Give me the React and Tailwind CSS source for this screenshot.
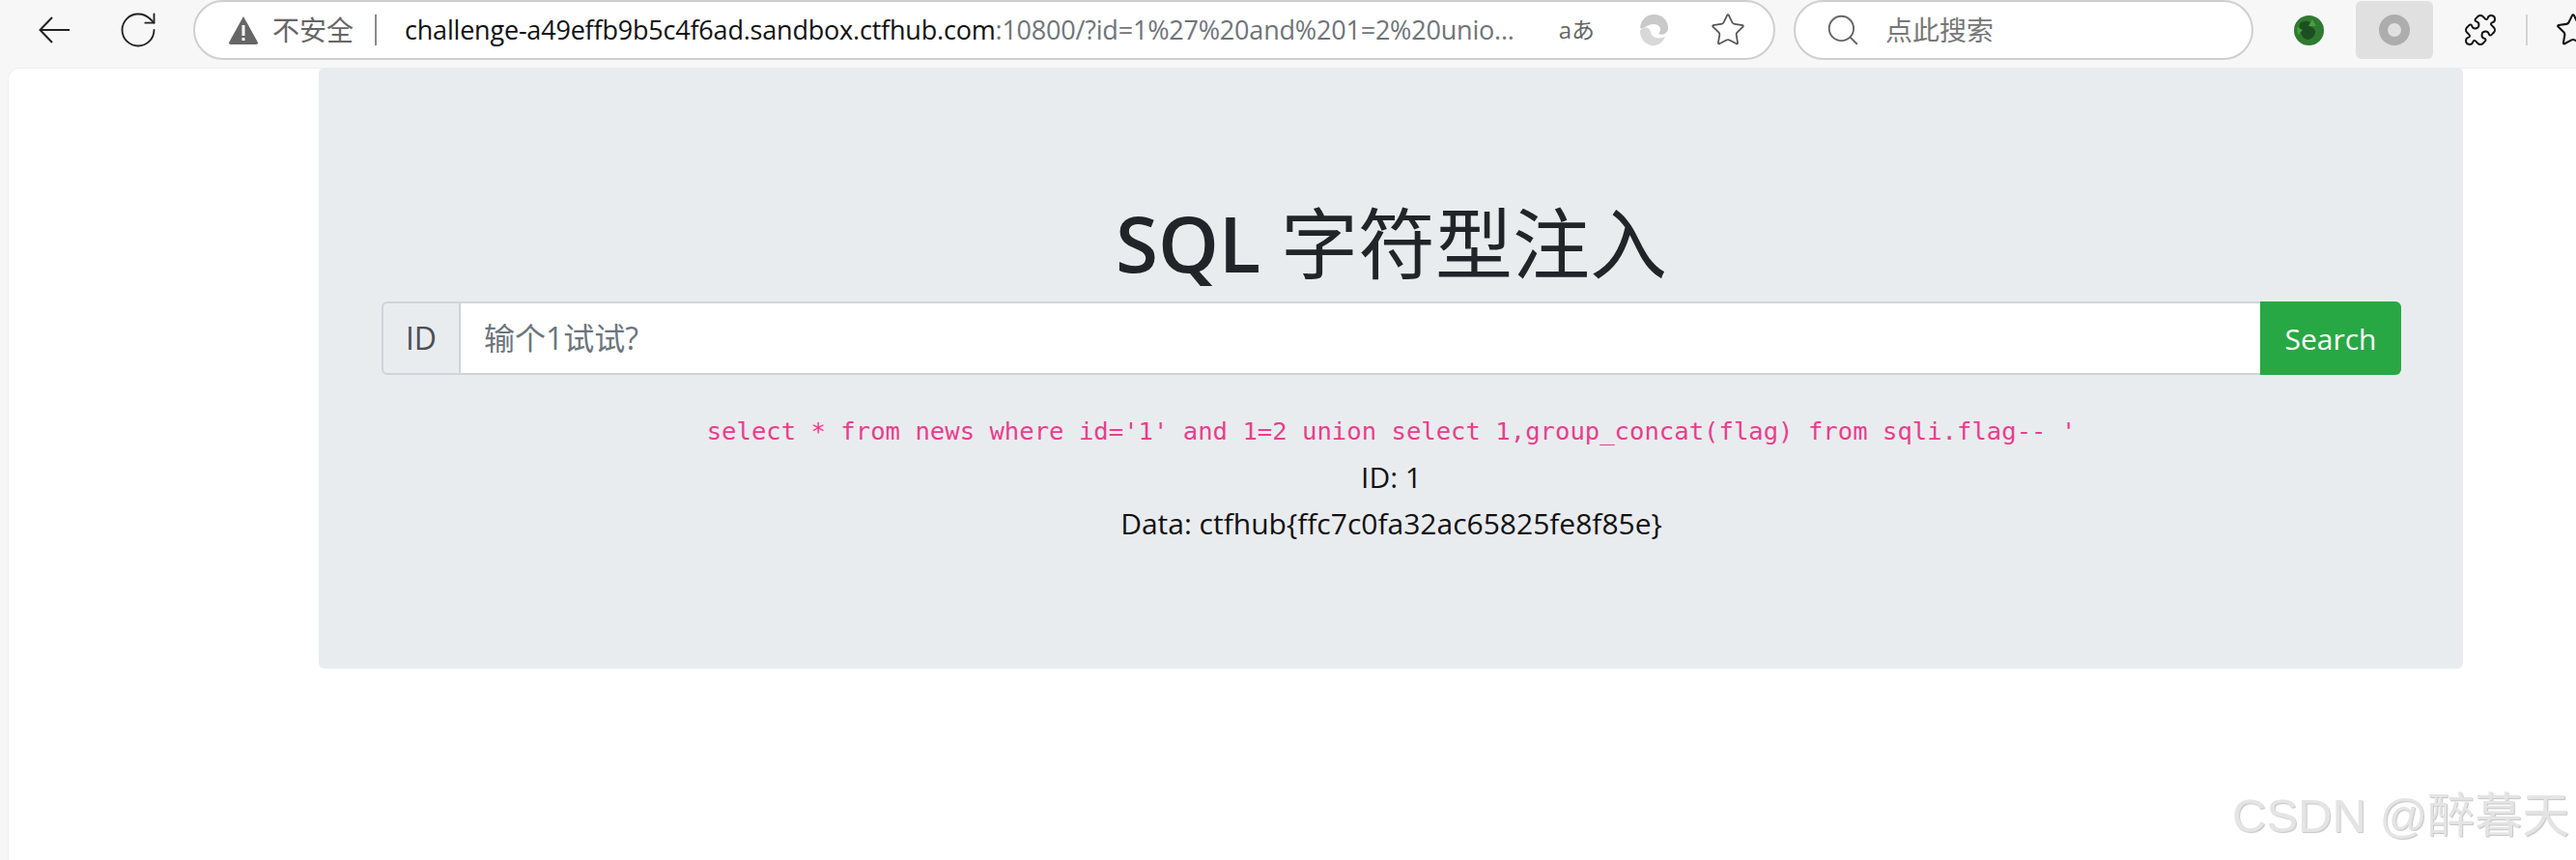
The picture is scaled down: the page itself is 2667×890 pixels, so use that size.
import React from "react";
import { RotateCw, Star, Search, Puzzle } from "lucide-react";

const cjk = "font-['Open_Sans','Noto_Sans_CJK_SC',sans-serif]";

const BackIcon = () => (
  <svg width="32" height="28" viewBox="0 0 32 28" fill="none" stroke="#222" strokeWidth="2">
    <path d="M14 1 L1.500 14 L14 27 M2 14 H32" />
  </svg>
);

// Windows style warning triangle of the address bar
const WarnIcon = () => (
  <svg width="32" height="30" viewBox="0 0 32 30">
    <path d="M16 1 L31 28 Q31.500 30 29 30 L3 30 Q0.500 30 1 28 Z" fill="#666" />
    <rect x="14.500" y="10" width="3" height="11" fill="#fff" />
    <rect x="14.500" y="23" width="3" height="3" fill="#fff" />
  </svg>
);

// Greyed out Edge logo
const EdgeIcon = () => (
  <svg width="34" height="34" viewBox="0 0 32 34">
    <path d="M2 15 C3 5 10 1 16 1 C26 1 31 8 31 15 C31 21 25 23 21 21 C25 17 23 11 16 11 C9 11 5 17 2 15 Z" fill="#c9c9c9" />
    <path d="M13 19 C14 25 21 27 28 24 C25 31 19 34 13 33 C6 31 2 25 2 18 C5 13 11 13 13 19 Z" fill="#d8d8d8" />
  </svg>
);

// Round green extension badge
const GreenBadge = () => (
  <svg width="31" height="31" viewBox="0 0 31 31">
    <circle cx="15.500" cy="15.500" r="15.500" fill="#2f7a30" />
    <path d="M6 8 C13 3 20 7 17 12 C25 13 23 23 15 25 C9 25 5 18 6 8 Z" fill="#1c4f20" />
    <path d="M19 4 L23 11 L15 11 Z" fill="#4c9b45" />
    <path d="M3 12 L9 15 L4 20 Z" fill="#4c9b45" />
  </svg>
);

const Toolbar = () => (
  <div className="flex items-start h-[70px] bg-[#f7f7f7] pl-[40px] shrink-0">
    <div className="flex items-center h-[62px] w-[160px] shrink-0">
      <BackIcon />
      <RotateCw size={44} strokeWidth={1} className="ml-[49px] text-[#222]" />
    </div>

    {/* address bar */}
    <div className="flex items-center h-[62px] w-[1638px] shrink-0 bg-white border-2 border-[#cfcfcf] rounded-[31px] pl-[34px] pr-[28px]">
      <WarnIcon />
      <span className={`ml-[14px] text-[28px] text-[#666] ${cjk}`}>不安全</span>
      <span className="ml-[22px] w-[2px] h-[32px] bg-[#8a8a8a]"></span>
      <div className="ml-[29px] flex-1 text-[27px] font-['Open_Sans',sans-serif] whitespace-nowrap tracking-[-0.2px]">
        <span className="text-[#111]">challenge-a49effb9b5c4f6ad.sandbox.ctfhub.com</span>
        <span className="text-[#6f7479]">:10800/?id=1%27%20and%201=2%20unio...</span>
      </div>
      <span className={`text-[24px] text-[#666] mr-[44px] ${cjk}`}>aあ</span>
      <span className="mr-[41px]">
        <EdgeIcon />
      </span>
      <Star size={38} strokeWidth={1.1} className="text-[#555]" />
    </div>

    {/* search box */}
    <div className="ml-[19px] flex items-center h-[62px] w-[476px] shrink-0 bg-white border-2 border-[#cfcfcf] rounded-[31px] pl-[34px]">
      <Search size={38} strokeWidth={1.2} className="text-[#666] -ml-[4px]" />
      <span className={`ml-[25px] text-[28px] text-[#777] ${cjk}`}>点此搜索</span>
    </div>

    <div className="flex items-center h-[62px] ml-[42px]">
      <GreenBadge />
      <div className="ml-[33px] w-[80px] h-[60px] rounded-[6px] bg-[#e0e0e0] flex items-center justify-center">
        <div className="w-[32px] h-[32px] rounded-full border-[9px] border-[#adadad]"></div>
      </div>
      <Puzzle size={36} strokeWidth={1.3} className="ml-[31px] text-[#111]" />
      <span className="ml-[29px] w-[2px] h-[32px] bg-[#d4d4d4]"></span>
      <Star size={38} strokeWidth={1.3} className="ml-[28px] text-[#111] shrink-0" />
    </div>
  </div>
);

const App = () => {
  return (
    <div className="relative w-[2667px] h-[890px] overflow-hidden bg-[#f7f7f7] flex flex-col">
      <Toolbar />

      <div className="flex-1 ml-[8px] bg-white rounded-tl-[12px] border-t border-l border-[#eeeeee] pl-[321px]">
        <div className="w-[2220px] h-[622px] -mt-px bg-[#e9ecef] rounded-[6px] pt-[125px] pl-[65px] pr-[64px]">
          <h1 className={`text-center text-[80px] leading-[112px] text-[#212529] font-normal ${cjk}`}>
            <span className="font-semibold">SQL</span> 字符型注入
          </h1>

          <div className="flex h-[76px] mt-[5px]">
            <div className="flex items-center justify-center w-[82px] bg-[#e9ecef] border-2 border-[#ced4da] rounded-l-[6px] text-[32px] text-[#495057] font-['Open_Sans',sans-serif]">
              ID
            </div>
            <div className={`flex-1 flex items-center bg-white border-y-2 border-[#ced4da] pl-[24px] text-[32px] text-[#6c757d] ${cjk}`}>
              输个1试试?
            </div>
            <button className="w-[146px] bg-[#28a745] rounded-r-[6px] text-white text-[30px] font-['Open_Sans',sans-serif]">
              Search
            </button>
          </div>

          <div className="mt-[34px] text-center">
            <code className="block text-[25.6px] leading-[48px] text-[#e83e8c] font-['DejaVu_Sans_Mono',monospace]">
              {"select * from news where id='1' and 1=2 union select 1,group_concat(flag) from sqli.flag-- '"}
            </code>
            <p className="text-[30px] leading-[48px] text-[#111] font-['Open_Sans',sans-serif]">ID: 1</p>
            <p className="text-[30px] leading-[48px] text-[#111] font-['Open_Sans',sans-serif]">Data: ctfhub{"{ffc7c0fa32ac65825fe8f85e}"}</p>
          </div>
        </div>
      </div>

      {/* CSDN watermark */}
      <div className="absolute left-[2311px] top-[816px] text-[49px] leading-[56px] whitespace-nowrap text-[#e4e4e4] [text-shadow:1px_1px_1px_#c4c4c4] font-['Liberation_Sans','Noto_Sans_CJK_SC',sans-serif]">
        CSDN @醉暮天
      </div>
    </div>
  );
};

export default App;
